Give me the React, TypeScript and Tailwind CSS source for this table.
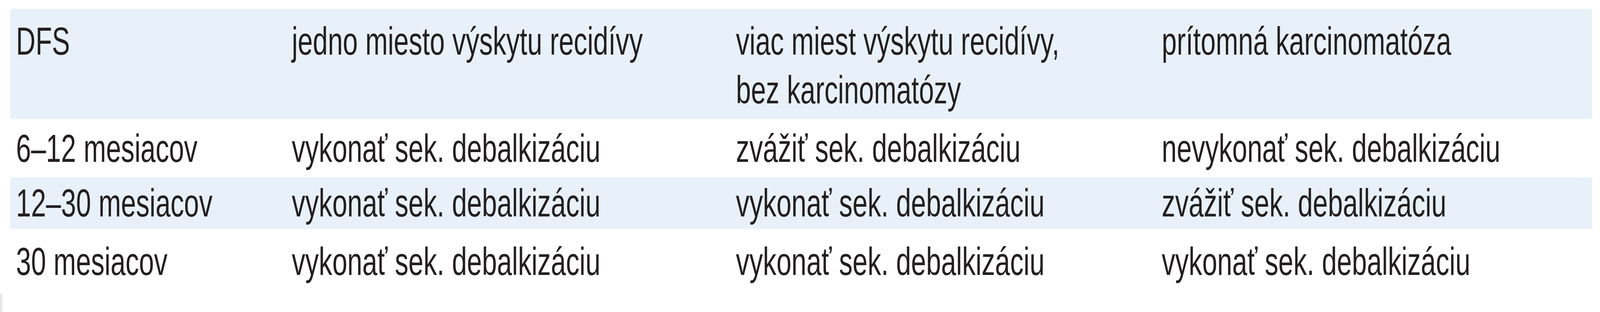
import React, { useEffect, useState } from "react";

// reference is drawn at 5929px wide; the browser gives us less, so the text
// is squeezed horizontally by the same ratio as the vw-based columns
const REF_WIDTH = 5929;

type Row = {
  cells: React.ReactNode[];
  shaded: boolean;
  pad: string;
};

const rows: Row[] = [
  {
    cells: [
      "DFS",
      "jedno miesto výskytu recidívy",
      <>
        viac miest výskytu recidívy,
        <br />
        bez karcinomatózy
      </>,
      "prítomná karcinomatóza",
    ],
    shaded: true,
    pad: "pt-[20px] pb-[12px]",
  },
  {
    cells: [
      "6–12 mesiacov",
      "vykonať sek. debalkizáciu",
      "zvážiť sek. debalkizáciu",
      "nevykonať sek. debalkizáciu",
    ],
    shaded: false,
    pad: "pt-[13px] pb-[12px]",
  },
  {
    cells: [
      "12–30 mesiacov",
      "vykonať sek. debalkizáciu",
      "vykonať sek. debalkizáciu",
      "zvážiť sek. debalkizáciu",
    ],
    shaded: true,
    pad: "pt-[3px] pb-[4px]",
  },
  {
    cells: [
      "30 mesiacov",
      "vykonať sek. debalkizáciu",
      "vykonať sek. debalkizáciu",
      "vykonať sek. debalkizáciu",
    ],
    shaded: false,
    pad: "pt-[21px] pb-[12px]",
  },
];

export default function App() {
  const [sx, setSx] = useState(() =>
    typeof window === "undefined" ? 1 : window.innerWidth / REF_WIDTH
  );

  useEffect(() => {
    const onResize = () => setSx(window.innerWidth / REF_WIDTH);
    window.addEventListener("resize", onResize);
    return () => window.removeEventListener("resize", onResize);
  }, []);

  return (
    <div className="w-full h-[800px] overflow-hidden bg-white pt-[23px] font-['Liberation_Sans',Arial,sans-serif] text-[100px] leading-[125px] text-[#231f20]">
      <div className="ml-[0.641vw] w-[98.87vw]">
        {rows.map((row, i) => (
          <div
            key={i}
            className={`grid grid-cols-[17.237vw_27.745vw_26.615vw_27.273vw] ${row.pad} ${
              row.shaded ? "bg-[#e8f1fa]" : "bg-white"
            }`}
          >
            {row.cells.map((cell, j) => (
              <div key={j} className="pl-[0.371vw] whitespace-nowrap">
                <span
                  className="inline-block origin-left"
                  style={{ transform: `scaleX(${sx})` }}
                >
                  {cell}
                </span>
              </div>
            ))}
          </div>
        ))}
      </div>
      {/* faint page edge at bottom left */}
      <div className="mt-[8px] h-[47px] w-[0.27vw] rounded-tr-full bg-gradient-to-r from-[#e2e2e2] to-transparent" />
    </div>
  );
}
